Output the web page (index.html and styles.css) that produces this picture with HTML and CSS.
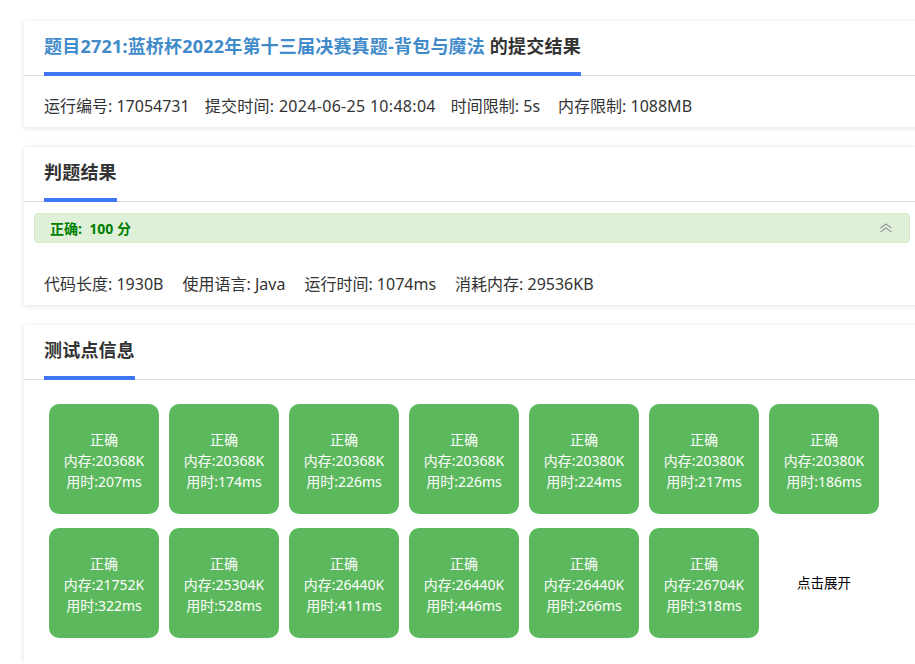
FILE: index.html
```html
<!DOCTYPE html>
<html lang="zh-CN">
<head>
<meta charset="utf-8">
<title>提交结果</title>
<link rel="stylesheet" href="styles.css">
</head>
<body>
<div class="page">
  <section class="card">
    <div class="card-head">
      <h1 class="head-title"><span class="problem">题目2721:蓝桥杯2022年第十三届决赛真题-背包与魔法</span> 的提交结果</h1>
    </div>
    <div class="info-row">
      <span>运行编号: 17054731</span>
      <span>提交时间: 2024-06-25 10:48:04</span>
      <span>时间限制: 5s</span>
      <span>内存限制: 1088MB</span>
    </div>
  </section>

  <section class="card">
    <div class="card-head">
      <h2 class="head-title">判题结果</h2>
    </div>
    <div class="result-body">
      <div class="result-bar">
        <span class="result-text">正确:&nbsp;&nbsp;100 分</span>
        <svg class="chevron" width="14" height="10" viewBox="0 0 14 10" aria-hidden="true">
          <path d="M1.5 5 L7 1 L12.5 5 M1.5 9 L7 5 L12.5 9" fill="none" stroke="#9a9a9a" stroke-width="1.2"/>
        </svg>
      </div>
      <div class="info-row info-row-b">
        <span>代码长度: 1930B</span>
        <span>使用语言: Java</span>
        <span>运行时间: 1074ms</span>
        <span>消耗内存: 29536KB</span>
      </div>
    </div>
  </section>

  <section class="card">
    <div class="card-head">
      <h2 class="head-title">测试点信息</h2>
    </div>
    <div class="tiles">
      <div class="tile"><span>正确</span><span>内存:20368K</span><span>用时:207ms</span></div>
      <div class="tile"><span>正确</span><span>内存:20368K</span><span>用时:174ms</span></div>
      <div class="tile"><span>正确</span><span>内存:20368K</span><span>用时:226ms</span></div>
      <div class="tile"><span>正确</span><span>内存:20368K</span><span>用时:226ms</span></div>
      <div class="tile"><span>正确</span><span>内存:20380K</span><span>用时:224ms</span></div>
      <div class="tile"><span>正确</span><span>内存:20380K</span><span>用时:217ms</span></div>
      <div class="tile"><span>正确</span><span>内存:20380K</span><span>用时:186ms</span></div>
      <div class="tile"><span>正确</span><span>内存:21752K</span><span>用时:322ms</span></div>
      <div class="tile"><span>正确</span><span>内存:25304K</span><span>用时:528ms</span></div>
      <div class="tile"><span>正确</span><span>内存:26440K</span><span>用时:411ms</span></div>
      <div class="tile"><span>正确</span><span>内存:26440K</span><span>用时:446ms</span></div>
      <div class="tile"><span>正确</span><span>内存:26440K</span><span>用时:266ms</span></div>
      <div class="tile"><span>正确</span><span>内存:26704K</span><span>用时:318ms</span></div>
      <div class="tile tile-more">点击展开</div>
    </div>
  </section>
</div>
</body>
</html>
```

FILE: styles.css
```css
html {
  overflow: hidden;
}

body {
  margin: 0;
  background: #fff;
  font-family: "Noto Sans", "Noto Sans CJK SC", sans-serif;
  color: #333;
}

.page {
  padding: 21px 0 0 24px;
  width: 896px;
  display: flex;
  flex-direction: column;
  gap: 20px;
}

.card {
  background: #fff;
  box-shadow: 0 1px 6px rgba(0, 0, 0, 0.12);
}

.card-head {
  padding: 0 20px;
  border-bottom: 1px solid #ddd;
  display: flex;
}

.head-title {
  margin: 0 0 -1px;
  padding: 10px 0 11px;
  font-size: 18px;
  line-height: 30px;
  font-weight: bold;
  color: #333;
  border-bottom: 4px solid #4076f6;
  letter-spacing: 0.2px;
}

.problem {
  color: #428bca;
}

.info-row {
  display: flex;
  gap: 15px;
  padding: 19px 20px 10px;
  font-size: 16px;
  line-height: 22px;
  color: #333;
}

.info-row span:nth-child(2) {
  letter-spacing: 0.3px;
}

.info-row span:nth-child(4) {
  margin-left: 3px;
}

.result-body {
  padding: 11px 10px 0;
}

.result-bar {
  height: 30px;
  box-sizing: border-box;
  background: #dff0d8;
  border: 1px solid #d6e9c6;
  border-radius: 4px;
  display: flex;
  align-items: center;
  justify-content: space-between;
  padding: 0 16px 0 15px;
}

.result-text {
  color: #008000;
  font-weight: bold;
  font-size: 14px;
}

.chevron {
  display: block;
}

.info-row-b {
  gap: 19px;
  padding: 30px 10px 10px;
}

.info-row-b span:nth-child(2),
.info-row-b span:nth-child(4) {
  letter-spacing: 0;
  margin-left: 0;
}

.tiles {
  display: flex;
  flex-wrap: wrap;
  gap: 14px 10px;
  padding: 24px 25px 25px;
}

.tile {
  width: 110px;
  height: 110px;
  border-radius: 10px;
  background: #5cb85c;
  color: #fff;
  font-size: 14px;
  line-height: 21px;
  display: flex;
  flex-direction: column;
  align-items: center;
  justify-content: center;
  padding-top: 3px;
  box-sizing: border-box;
}

.tile-more {
  background: transparent;
  color: #000;
  font-size: 13.5px;
  padding-top: 0;
}
```
